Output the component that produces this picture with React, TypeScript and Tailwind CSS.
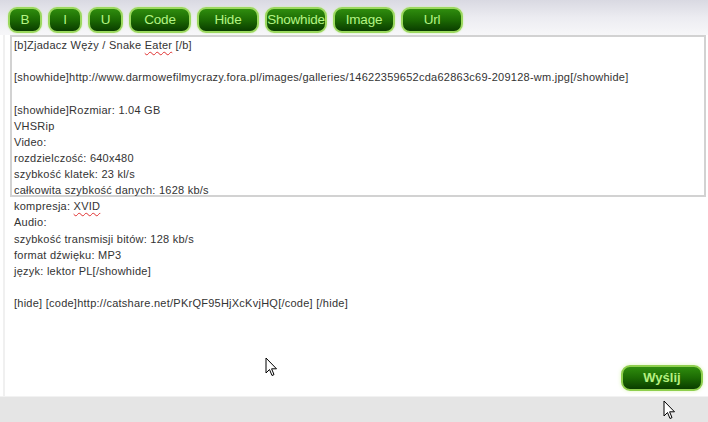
import React from "react";

const lines = [
  "[b]Zjadacz Węży / Snake Eater [/b]",
  "",
  "[showhide]http://www.darmowefilmycrazy.fora.pl/images/galleries/14622359652cda62863c69-209128-wm.jpg[/showhide]",
  "",
  "[showhide]Rozmiar: 1.04 GB",
  "VHSRip",
  "Video:",
  "rozdzielczość: 640x480",
  "szybkość klatek: 23 kl/s",
  "całkowita szybkość danych: 1628 kb/s",
  "kompresja: XVID",
  "Audio:",
  "szybkość transmisji bitów: 128 kb/s",
  "format dźwięku: MP3",
  "język: lektor PL[/showhide]",
  "",
  "[hide] [code]http://catshare.net/PKrQF95HjXcKvjHQ[/code] [/hide]",
];

const buttons = [
  { label: "B", w: "w-[34px]" },
  { label: "I", w: "w-[34px]" },
  { label: "U", w: "w-[35px]" },
  { label: "Code", w: "w-[62px]" },
  { label: "Hide", w: "w-[62px]" },
  { label: "Showhide", w: "w-[62px]" },
  { label: "Image", w: "w-[62px]" },
  { label: "Url", w: "w-[62px]" },
];

function Cursor() {
  return (
    <svg width="13" height="20" viewBox="0 0 13 20">
      <path
        d="M1 1 L1 16 L4.5 12.5 L7 18.5 L9 17.6 L6.6 11.8 L11.5 11.8 Z"
        fill="#fff"
        stroke="#000"
        strokeWidth="1"
        strokeLinejoin="miter"
      />
    </svg>
  );
}

function Squiggle({ children }: { children: React.ReactNode }) {
  return (
    <span className="underline decoration-wavy decoration-[#e03030] decoration-1 underline-offset-2">
      {children}
    </span>
  );
}

function renderLine(l: string) {
  if (l.includes("Eater")) {
    return (
      <>
        [b]Zjadacz Węży / Snake <Squiggle>Eater</Squiggle> [/b]
      </>
    );
  }
  if (l.includes("XVID")) {
    return (
      <>
        kompresja: <Squiggle>XVID</Squiggle>
      </>
    );
  }
  return l || "\u00a0";
}

export default function App() {
  return (
    <div
      className="relative w-[708px] h-[422px] flex flex-col bg-white overflow-hidden text-[#333333]"
      style={{ fontFamily: "Tahoma, 'Liberation Sans', 'DejaVu Sans', sans-serif" }}
    >
      <div className="h-[35px] flex items-start pt-[7px] pl-[8px] gap-[6px] bg-gradient-to-b from-[#d9d9e2] via-[#ececf1] to-[#f7f7f9]">
        {buttons.map((b) => (
          <div
            key={b.label}
            className={`${b.w} h-[26px] rounded-[9px] border-2 border-[#9bd85e] bg-gradient-to-b from-[#2f8d0e] via-[#1c6a04] to-[#0a3d00] shadow-[0_0_2px_#c8f0a0] flex items-center justify-center text-[13.5px] text-[#b4f484] tracking-[-0.2px]`}
          >
            {b.label}
          </div>
        ))}
      </div>
      <div className="flex-1 flex flex-col border-l-[2px] border-[#f0f0f0] ml-[3px]">
        <div className="ml-[5px] w-[696px] h-[162px] border-2 border-[#d2d2d2] shrink-0">
          <div className="pl-[2px] text-[11px] leading-[16.12px] tracking-[0.25px]">
            {lines.map((l, i) => (
              <div key={i} className="whitespace-nowrap">
                {renderLine(l)}
              </div>
            ))}
          </div>
        </div>
        <div className="flex-1" />
        <div className="flex justify-end pr-[5px] pb-[5px]">
          <div className="w-[82px] h-[26px] rounded-[9px] border-2 border-[#8fcf4e] bg-gradient-to-b from-[#2f8d0e] via-[#1c6a04] to-[#0a3d00] shadow-[0_0_4px_#e0f5c0] flex items-center justify-center text-[13px] font-bold text-[#b6f080]">
            Wyślij
          </div>
        </div>
      </div>
      <div className="h-[26px] bg-[#e5e5e5] border-t border-[#f2f2f2]" />
      <div className="absolute left-[265px] top-[357px]">
        <Cursor />
      </div>
      <div className="absolute left-[663px] top-[400px]">
        <Cursor />
      </div>
    </div>
  );
}
